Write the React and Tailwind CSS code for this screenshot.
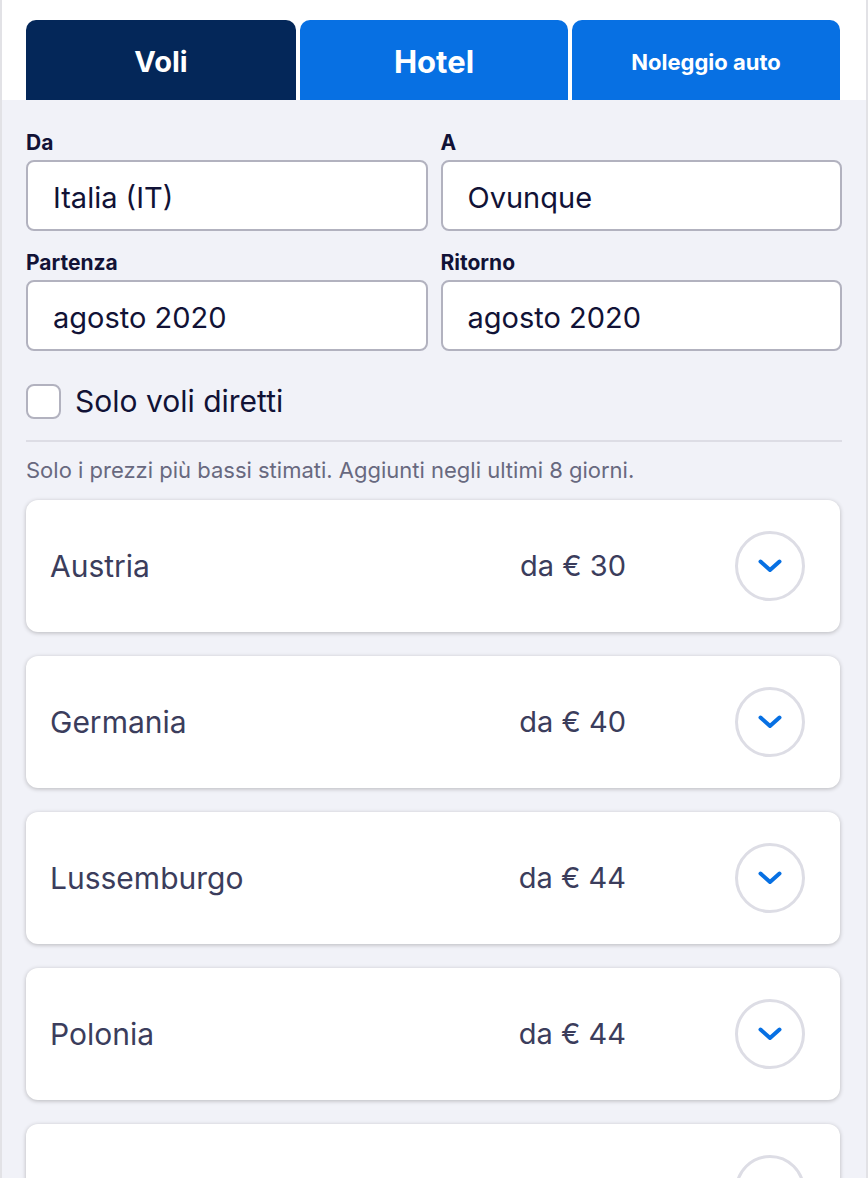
import React from "react";

const rows = [
  ["Austria", "da € 30"],
  ["Germania", "da € 40"],
  ["Lussemburgo", "da € 44"],
  ["Polonia", "da € 44"],
  ["", ""],
];

function Chevron() {
  return (
    <svg width="26" height="16" viewBox="0 0 26 16" fill="none">
      <path d="M3.5 3.5L13 12L22.5 3.5" stroke="#0770e3" strokeWidth="4" strokeLinecap="round" strokeLinejoin="round" />
    </svg>
  );
}

function Field({ label, value }) {
  return (
    <div className="flex flex-col">
      <div className="text-[21px] font-bold text-[#111236] leading-[24px] mb-[5px]">{label}</div>
      <div className="h-[71px] bg-white border-2 border-[#b2b2bf] rounded-[8px] flex items-center px-[25px] pt-[4px] text-[29px] text-[#111236]">
        {value}
      </div>
    </div>
  );
}

export default function App() {
  return (
    <div className="w-[868px] h-[1178px] overflow-hidden border-l-2 border-r-2 border-[#e2e2e6] bg-[#f1f2f8]" style={{ fontFamily: "Inter, 'Noto Sans', sans-serif" }}>
      <div className="bg-white pt-[20px] px-[24px] flex gap-[4px]">
        <div className="w-[270px] h-[80px] pt-[4px] rounded-t-[10px] bg-[#042759] text-white font-bold text-[29px] flex items-center justify-center">Voli</div>
        <div className="w-[268px] h-[80px] pt-[4px] rounded-t-[10px] bg-[#0770e3] text-white font-bold text-[31px] flex items-center justify-center">Hotel</div>
        <div className="w-[268px] h-[80px] pt-[4px] rounded-t-[10px] bg-[#0770e3] text-white font-bold text-[22px] flex items-center justify-center">Noleggio auto</div>
      </div>
      <div className="px-[24px] pt-[31px]">
        <div className="grid grid-cols-2 gap-x-[13px] gap-y-[20px]">
          <Field label="Da" value="Italia (IT)" />
          <Field label="A" value="Ovunque" />
          <Field label="Partenza" value="agosto 2020" />
          <Field label="Ritorno" value="agosto 2020" />
        </div>
        <div className="flex items-center h-[35px] mt-[33px] gap-[14px]">
          <div className="w-[35px] h-[35px] rounded-[8px] border-2 border-[#b2b2bf] bg-white" />
          <div className="text-[30px] leading-[35px] text-[#111236]">Solo voli diretti</div>
        </div>
        <div className="h-[2px] bg-[#dddde5] mt-[21px]" />
        <div className="text-[22px] text-[#68697f] mt-[15px] leading-[26px]">Solo i prezzi più bassi stimati. Aggiunti negli ultimi 8 giorni.</div>
        <div className="flex flex-col gap-[24px] mt-[17px] mr-[2px]">
          {rows.map(([n, p], i) => (
            <div key={i} className="h-[132px] bg-white rounded-[12px] shadow-[0_1px_4px_rgba(37,32,31,0.28)] flex items-center pl-[24px] pr-[35px]">
              <div className="flex-1 text-[30px] text-[#3b3d5c]">{n}</div>
              <div className="text-[29px] text-[#3b3d5c] mr-[109px]">{p}</div>
              <div className="w-[70px] h-[70px] rounded-full border-[3px] border-[#dddde5] flex items-center justify-center">
                <Chevron />
              </div>
            </div>
          ))}
        </div>
      </div>
    </div>
  );
}
